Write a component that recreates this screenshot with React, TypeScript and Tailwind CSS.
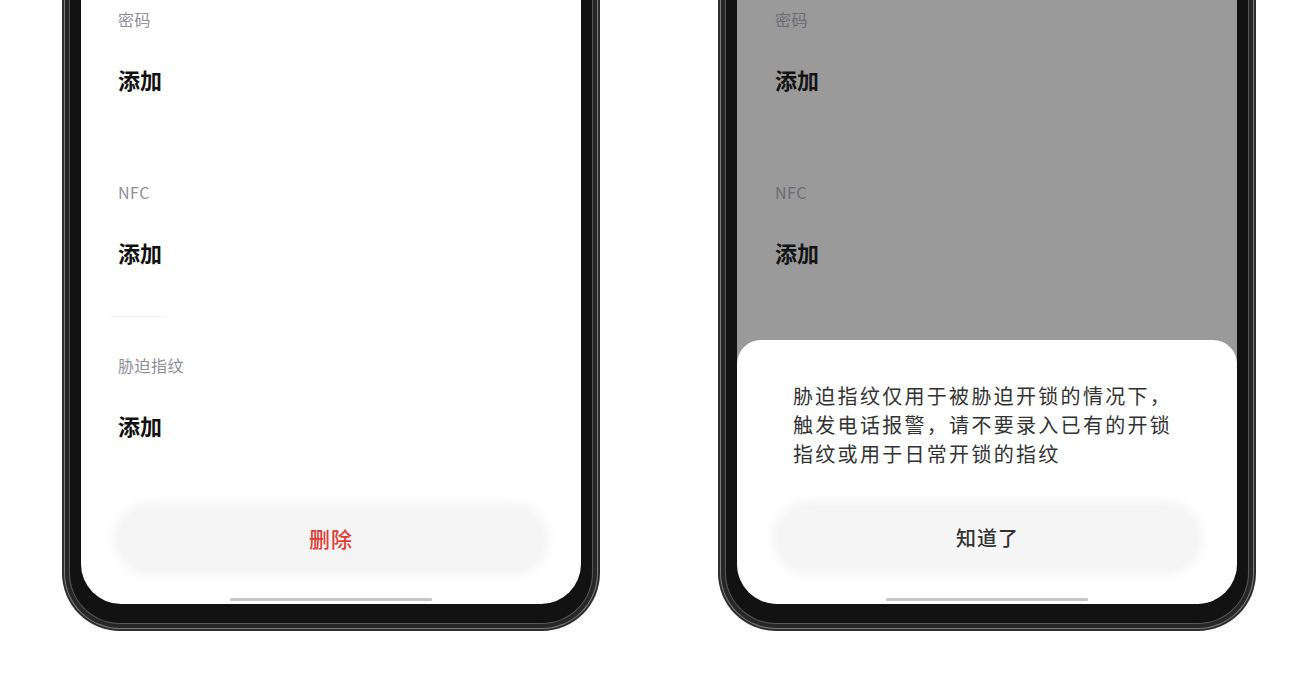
import React from 'react';

const font = { fontFamily: '"Noto Sans CJK SC", "Noto Sans", sans-serif' };

const sections = ['密码', 'NFC', '胁迫指纹'];

const PhoneFrame = ({ children }: { children: React.ReactNode }) => (
  <div className="w-[538px] shrink-0 bg-[#2e2e2e] px-[2px] pb-[2px] rounded-b-[58px]">
    <div className="bg-[#7c7c7c] px-[1px] pb-[1px] rounded-b-[56px]">
      <div className="bg-[#272727] px-[4px] pb-[4px] rounded-b-[55px]">
        <div className="bg-[#585858] px-[1px] pb-[1px] rounded-b-[51px]">
          <div className="bg-[#121212] px-[11px] pb-[19px] rounded-b-[50px]">
            <div className="relative h-[604px] rounded-b-[40px] overflow-hidden flex flex-col">
              {children}
            </div>
          </div>
        </div>
      </div>
    </div>
  </div>
);

const HomeBar = () => (
  <div className="mt-auto mb-[3px] self-center w-[202px] h-[3px] rounded-full bg-[#c6c6c6]" />
);

const App = () => {
  return (
    <div className="w-[1305px] h-[700px] bg-white overflow-hidden flex items-start gap-[118px] pl-[62px]" style={font}>
      {/* left: settings list */}
      <PhoneFrame>
        <div className="flex-1 flex flex-col bg-white">
          <div className="flex flex-col pt-[9px] pl-[37px]">
            {sections.map((label, i) => (
              <div key={label} className={i < 2 ? 'h-[173px]' : ''}>
                <div className="h-[20px] leading-[20px] text-[16px] tracking-[0.5px] text-[#8e8e99]">{label}</div>
                <div className="mt-[35px] h-[30px] leading-[30px] text-[22px] font-semibold text-[#111]">添加</div>
                {i === 1 && <div className="mt-[49px] -ml-[8px] w-[56px] h-px bg-[#f2f2f2]" />}
              </div>
            ))}
          </div>
          <div className="mt-[67px] mx-[37px] h-[64px] rounded-full bg-[#f5f5f5] shadow-[0_0_10px_5px_rgba(244,244,244,0.9)] flex items-center justify-center">
            <span className="text-[21px] font-medium text-[#e03a33] tracking-[1px]">删除</span>
          </div>
          <HomeBar />
        </div>
      </PhoneFrame>

      {/* right: dimmed list with bottom sheet */}
      <PhoneFrame>
        <div className="flex-1 flex flex-col bg-[#9a9a9a]">
          <div className="flex flex-col pt-[9px] pl-[38px]">
            {sections.slice(0, 2).map((label) => (
              <div key={label} className="h-[173px]">
                <div className="h-[20px] leading-[20px] text-[16px] tracking-[0.5px] text-[#6c6c76]">{label}</div>
                <div className="mt-[35px] h-[30px] leading-[30px] text-[22px] font-semibold text-[#141414]">添加</div>
              </div>
            ))}
          </div>
        </div>
        <div className="absolute left-0 right-0 bottom-0 h-[264px] bg-white rounded-t-[24px] flex flex-col">
          <p className="pt-[41px] pl-[56px] pr-[40px] text-[20px] leading-[29px] tracking-[2.3px] text-[#333]">
            胁迫指纹仅用于被胁迫开锁的情况下，
            <br />
            触发电话报警，请不要录入已有的开锁
            <br />
            指纹或用于日常开锁的指纹
          </p>
          <div className="mt-[38px] ml-[40px] mr-[39px] h-[64px] rounded-full bg-[#f5f5f5] shadow-[0_0_10px_5px_rgba(244,244,244,0.9)] flex items-center justify-center">
            <span className="text-[20px] font-medium text-[#333] tracking-[1px]">知道了</span>
          </div>
          <HomeBar />
        </div>
      </PhoneFrame>
    </div>
  );
};

export default App;
